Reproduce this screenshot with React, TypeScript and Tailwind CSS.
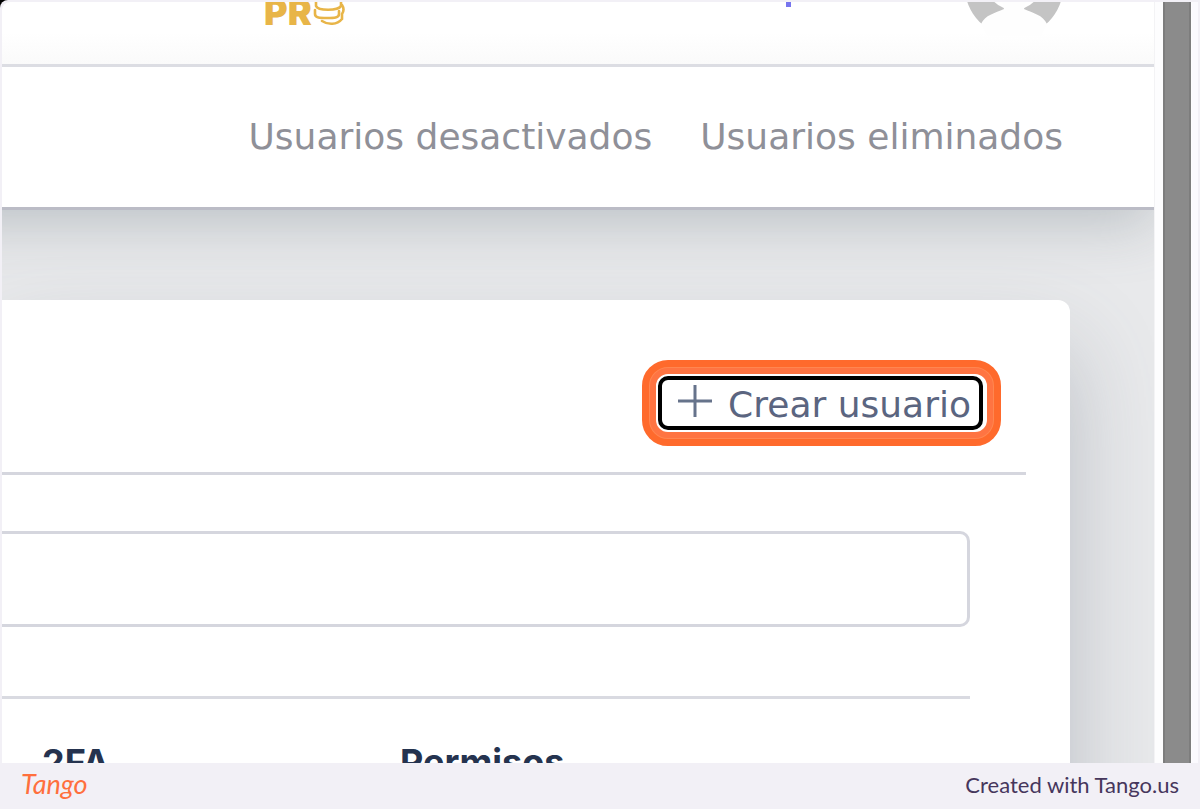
import React from "react";

function CoinStack() {
  return (
    <svg width="34" height="26" viewBox="0 0 34 26" fill="none" stroke="#e8b548" strokeWidth="2.6" strokeLinecap="round" strokeLinejoin="round" aria-hidden="true">
      <path d="M4 0v6c2 5 22 5 25 0V0" />
      <path d="M3 10v4c0 4 5 4 12 4s12 0 12-4v-3" />
      <path d="M30 5c2 3 2 6 0 9v5M10 21c6 4 15 4 20-2" />
    </svg>
  );
}

function Avatar() {
  return (
    <svg width="98" height="98" viewBox="0 0 98 98" aria-hidden="true">
      <circle cx="49" cy="49" r="49" fill="#c4c4c4" />
      <circle cx="49" cy="44" r="28" fill="#fff" />
      <path d="M16 86C20 77 30 75 39 71L37 63L49 60L61 63L59 71C68 75 78 77 82 86L76 98H22Z" fill="#fefefe" />
    </svg>
  );
}

function TopBar() {
  return (
    <header className="relative z-10 flex h-[65px] items-start justify-between border-b-3 border-[#dcdde3] bg-linear-to-b from-white from-50% to-[#fafafa] pr-[91px] pl-[262px]">
      <a href="#inicio" aria-label="PRO" className="-mt-3 flex items-end text-[#e8b548]">
        <span className="font-[Inter] text-[36px] leading-[44px] font-black">PR</span>
        <span className="pb-2">
          <CoinStack />
        </span>
      </a>
      <div className="flex items-start">
        <span className="mt-[-9px] mr-[174px] h-[14px] w-[5px] bg-[#7775ee]" />
        <button type="button" aria-label="Perfil" className="-mt-16 block">
          <Avatar />
        </button>
      </div>
    </header>
  );
}

export default function App() {
  return (
    <div className="bg-black">
      <div className="flex h-screen flex-col overflow-hidden rounded-tl-lg bg-[#f2f0f6] font-['DejaVu_Sans',sans-serif]">
        <div className="mx-[2px] mt-[2px] flex min-h-0 flex-1 overflow-hidden rounded-tl-lg bg-[#fdfdfe]">
          <div className="min-w-0 flex-1 overflow-hidden bg-[#e8e9eb]">
            <TopBar />
            <nav className="relative -ml-16 flex h-[143px] items-center justify-end gap-12 border-b-3 border-[#bbbcc6] bg-white pr-[91px] text-[36px] text-[#8f9098] shadow-[0_12px_60px_rgba(90,105,115,0.32)]">
              <a href="#desactivados">Usuarios desactivados</a>
              <a href="#eliminados">Usuarios eliminados</a>
            </nav>
            <main className="pt-[90px] pr-[84px]">
              <section className="relative h-[600px] rounded-tr-xl bg-white pt-[60px] pr-11 shadow-[0_50px_90px_rgba(90,98,115,0.32)]">
                <div className="flex justify-end border-b-3 border-[#d5d6de] pr-[25px] pb-[26px]">
                  <div className="rounded-[26px] border-[7px] border-[#ff6a2c] bg-[#ff8650] p-px">
                    <div className="rounded-[18px] border-[6px] border-[#ff7442] bg-white p-[2px] pr-1">
                      <button type="button" className="flex h-[54px] items-center gap-4 rounded-[10px] border-4 border-black pt-1 pr-2 pl-4 text-[36px] text-[#5b6580]">
                        <svg width="34" height="34" viewBox="0 0 34 34" fill="none" stroke="#66738b" strokeWidth="3" className="-mt-2" aria-hidden="true">
                          <path d="M0 17h34M17 1v32" />
                        </svg>
                        Crear usuario
                      </button>
                    </div>
                  </div>
                </div>
                <div className="pt-14 pr-14">
                  <input type="text" aria-label="Buscar usuario" className="block h-24 w-full rounded-r-[10px] border-3 border-l-0 border-[#d5d6de] bg-white px-8 text-[36px] outline-none" />
                  <table className="mt-[69px] w-full table-fixed border-t-3 border-[#d9dae1] text-left font-[Inter] text-[36px] text-[#25334f]">
                    <thead>
                      <tr>
                        <th className="w-[398px] pt-9 pl-10 font-bold">2FA</th>
                        <th className="pt-9 font-bold">Permisos</th>
                      </tr>
                    </thead>
                  </table>
                </div>
              </section>
            </main>
          </div>
          <div className="w-[38px] border-l border-[#f3f3f5] pl-2">
            <div className="h-full w-7 border-x-2 border-[#7d7d7d] bg-[#8b8b8b]" />
          </div>
          <div className="w-[6px] bg-[#fbfafe]" />
        </div>
        <footer className="flex h-[46px] shrink-0 items-center justify-between px-[21px] pb-1">
          <a href="#tango" className="font-[Lato] text-[27px] leading-[32px] text-[#ff6f3d] italic">Tango</a>
          <span className="font-[Lato] text-[22px] text-[#46365c]">Created with Tango.us</span>
        </footer>
      </div>
    </div>
  );
}
